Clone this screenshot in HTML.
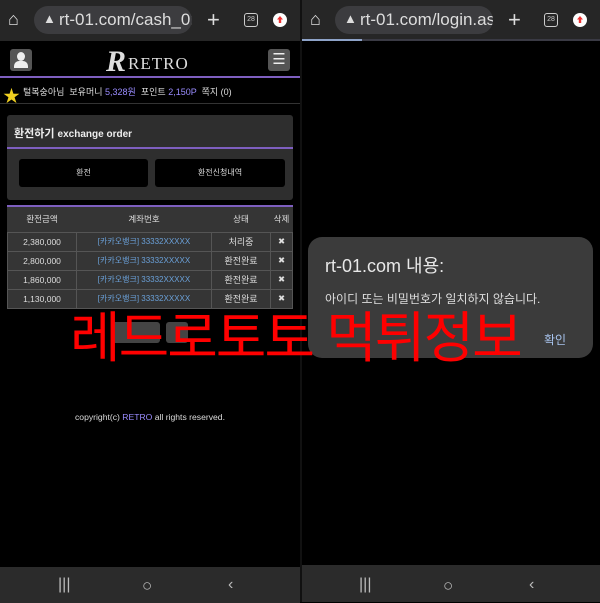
<!DOCTYPE html>
<html><head><meta charset="utf-8"><style>
*{margin:0;padding:0;box-sizing:border-box}
body{width:600px;height:602px;background:#000;position:relative;overflow:hidden;font-family:"Liberation Sans","Noto Sans CJK KR",sans-serif;color:#ddd}
.a{position:absolute}
.bar{background:#262626;height:41px;top:0}
.pill{background:#3c3c3f;border-radius:15px;height:28px;top:6px;color:#ddd;font-size:17px;line-height:28px;padding-left:25px;overflow:hidden;white-space:nowrap}
.ic{color:#ddd;font-size:18px}
.tab{border:1.5px solid #ccc;border-radius:3px;width:14px;height:14px;font-size:7px;text-align:center;line-height:11px;top:13px}
.red{width:14px;height:14px;border-radius:50%;background:#fff;top:13px}
.red:after{content:"";position:absolute;left:4px;top:3px;width:6px;height:7px;background:#e33;clip-path:polygon(50% 0,100% 50%,70% 50%,70% 100%,30% 100%,30% 50%,0 50%)}
td{border:1px solid #555;text-align:center;font-size:8.5px;height:19px;color:#ddd}
.nav{background:#2b2b2b;height:36px;top:566px}
.nv{color:#bbb;font-size:16px;top:576px}
</style></head><body>
<div class="a bar" style="left:0;width:300px"></div>
<div class="a ic" style="left:8px;top:9px">⌂</div>
<div class="a pill" style="left:34px;width:158px">rt-01.com/cash_02</div>
<div class="a" style="left:43px;top:11px;font-size:13px;color:#ddd">▲</div>
<div class="a ic" style="left:207px;top:7px;font-size:22px">+</div>
<div class="a tab" style="left:244px;color:#ccc">28</div>
<div class="a red" style="left:273px"></div>
<div class="a bar" style="left:302px;width:298px;height:39px"></div>
<div class="a" style="left:302px;top:39px;width:298px;height:2px;background:#3a3a44"></div>
<div class="a" style="left:302px;top:39px;width:60px;height:2px;background:#8ea3c8"></div>
<div class="a ic" style="left:310px;top:9px">⌂</div>
<div class="a pill" style="left:335px;width:158px">rt-01.com/login.as</div>
<div class="a" style="left:344px;top:11px;font-size:13px;color:#ddd">▲</div>
<div class="a ic" style="left:508px;top:7px;font-size:22px">+</div>
<div class="a tab" style="left:544px;color:#ccc">28</div>
<div class="a red" style="left:573px"></div>
<div class="a" style="left:300px;top:0;width:2px;height:602px;background:#111"></div>
<div class="a" style="left:10px;top:49px;width:22px;height:22px;background:#555;border-radius:3px"><div class="a" style="left:7px;top:3px;width:8px;height:9px;background:#eee;border-radius:50%"></div><div class="a" style="left:4px;top:12px;width:14px;height:7px;background:#eee;border-radius:5px 5px 0 0"></div></div>
<div class="a" style="left:106px;top:45px;font-family:'Liberation Serif',serif;font-size:30px;color:#ddd;font-weight:bold;font-style:italic">R</div>
<div class="a" style="left:128px;top:54px;font-family:'Liberation Serif',serif;font-size:17px;color:#ddd;letter-spacing:1px">RETRO</div>
<div class="a" style="left:268px;top:49px;width:22px;height:22px;background:#555;border-radius:3px;color:#eee;font-size:15px;text-align:center;line-height:22px">☰</div>
<div class="a" style="left:0;top:76px;width:300px;height:2px;background:#7e5fc0"></div>
<div class="a" style="left:3px;top:82px;color:#f0d020;font-size:17px">★</div>
<div class="a" style="left:23px;top:85px;font-size:9px;color:#ddd;white-space:nowrap">털복숭아님 &nbsp;보유머니 <span style="color:#9a8cff">5,328원</span> &nbsp;포인트 <span style="color:#9a8cff">2,150P</span> &nbsp;쪽지 (0)</div>
<div class="a" style="left:0;top:103px;width:300px;height:1px;background:#333"></div>
<div class="a" style="left:7px;top:115px;width:286px;height:85px;background:#2e2e2e;border-radius:3px"></div>
<div class="a" style="left:14px;top:125px;font-size:11px;color:#eee;font-weight:bold">환전하기 <span style="font-size:10px">exchange order</span></div>
<div class="a" style="left:7px;top:147px;width:286px;height:1.5px;background:#7e5fc0"></div>
<div class="a" style="left:19px;top:159px;width:129px;height:28px;background:#000;border-radius:3px;font-size:8px;text-align:center;line-height:28px">환전</div>
<div class="a" style="left:155px;top:159px;width:130px;height:28px;background:#000;border-radius:3px;font-size:8px;text-align:center;line-height:28px">환전신청내역</div>
<div class="a" style="left:7px;top:205px;width:286px;height:2px;background:#7e5fc0"></div>
<table class="a" style="left:7px;top:207px;width:286px;border-collapse:collapse;background:#353535">
<tr style="background:#353535"><td style="width:69px;height:25px;border:none">환전금액</td><td style="width:135px;border:none">계좌번호</td><td style="width:59px;border:none">상태</td><td style="border:none">삭제</td></tr>
<tr><td>2,380,000</td><td style="color:#6aa0d8;font-size:8px">[카카오뱅크] 33332XXXXX</td><td style="font-size:9px">처리중</td><td>✖</td></tr>
<tr><td>2,800,000</td><td style="color:#6aa0d8;font-size:8px">[카카오뱅크] 33332XXXXX</td><td style="font-size:9px">환전완료</td><td>✖</td></tr>
<tr><td>1,860,000</td><td style="color:#6aa0d8;font-size:8px">[카카오뱅크] 33332XXXXX</td><td style="font-size:9px">환전완료</td><td>✖</td></tr>
<tr><td>1,130,000</td><td style="color:#6aa0d8;font-size:8px">[카카오뱅크] 33332XXXXX</td><td style="font-size:9px">환전완료</td><td>✖</td></tr>
</table>
<div class="a" style="left:112px;top:322px;width:48px;height:21px;background:#444;border-radius:3px"></div>
<div class="a" style="left:166px;top:322px;width:22px;height:21px;background:#444;border-radius:3px"></div>
<div class="a" style="left:75px;top:412px;font-size:8.6px;color:#ddd">copyright(c) <span style="color:#9a8cff">RETRO</span> all rights reserved.</div>
<div class="a" style="left:308px;top:237px;width:285px;height:121px;background:#3b3b3b;border-radius:14px"></div>
<div class="a" style="left:325px;top:252px;font-size:18px;color:#e8e8e8">rt-01.com 내용:</div>
<div class="a" style="left:325px;top:290px;font-size:12px;color:#ddd">아이디 또는 비밀번호가 일치하지 않습니다.</div>
<div class="a" style="left:544px;top:331px;font-size:12px;color:#a8c4ee">확인</div>
<div class="a" style="left:70px;top:305px;font-size:55px;color:#ff0000;white-space:nowrap;letter-spacing:-2px;line-height:66px">레드로토토 먹튀정보</div>
<div class="a nav" style="left:0;width:300px;top:567px"></div>
<div class="a nav" style="left:302px;width:298px;top:565px;height:37px"></div>
<div class="a nv" style="left:58px">|||</div>
<div class="a nv" style="left:142px;font-size:17px">○</div>
<div class="a nv" style="left:228px">‹</div>
<div class="a nv" style="left:359px">|||</div>
<div class="a nv" style="left:443px;font-size:17px">○</div>
<div class="a nv" style="left:529px">‹</div>
</body></html>
